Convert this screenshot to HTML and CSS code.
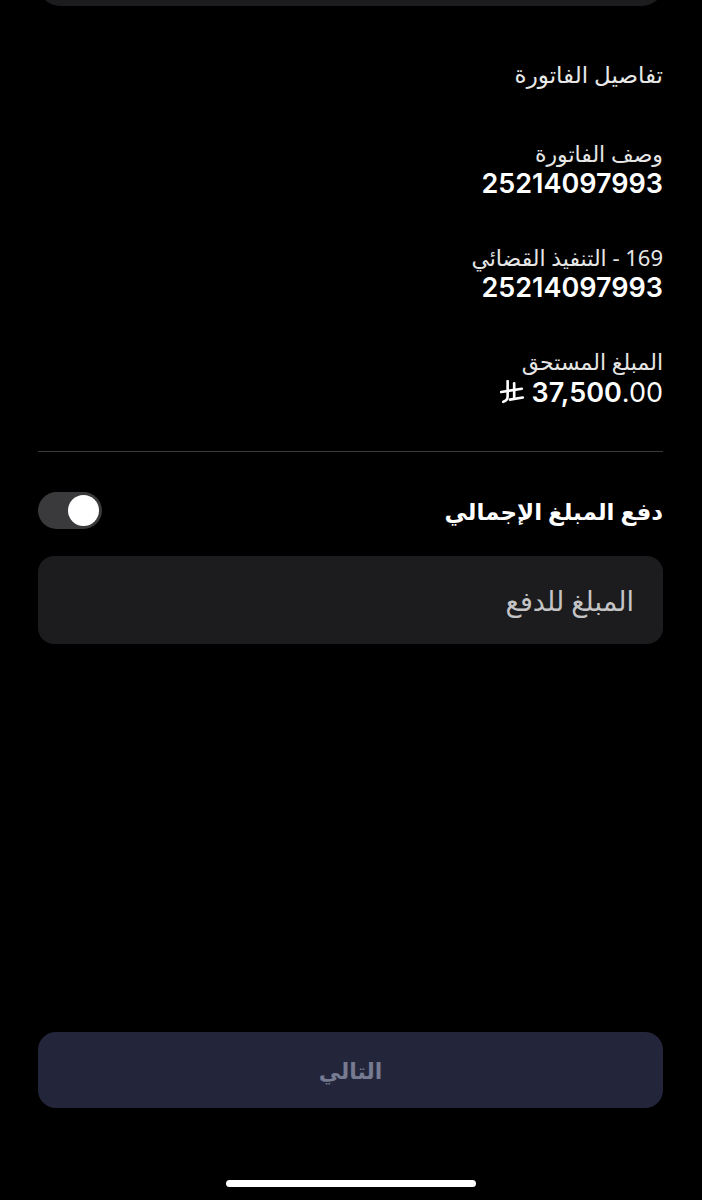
FILE: index.html
```html
<!DOCTYPE html>
<html lang="ar" dir="rtl">
<head>
    <meta charset="UTF-8">
    <meta name="viewport" content="width=device-width, initial-scale=1.0">
    <title>تفاصيل الفاتورة</title>
    <link rel="stylesheet" href="styles.css">
</head>
<body>
    <div class="screen">
        <div class="top-card"></div>

        <div class="content">
            <h2 class="title">تفاصيل الفاتورة</h2>

            <div class="detail">
                <div class="label">وصف الفاتورة</div>
                <div class="value">25214097993</div>
            </div>

            <div class="detail">
                <div class="label">169 - التنفيذ القضائي</div>
                <div class="value">25214097993</div>
            </div>

            <div class="detail">
                <div class="label">المبلغ المستحق</div>
                <div class="amount">
                    <svg class="riyal" width="24" height="24" viewBox="0 0 22 22">
                        <path d="M7 1 V15 Q7 19 3 20" />
                        <path d="M13 3 V17" />
                        <path d="M1 11 L20 8" />
                        <path d="M9 18 L21 16" />
                    </svg>
                    <span class="amount-int">37,500</span><span class="amount-dec">.00</span>
                </div>
            </div>

            <hr class="divider">

            <div class="toggle-row">
                <span class="toggle-label">دفع المبلغ الإجمالي</span>
                <span class="switch"><span class="knob"></span></span>
            </div>

            <input class="amount-input" type="text" placeholder="المبلغ للدفع">
        </div>

        <button class="next-btn" type="button">التالي</button>
        <div class="home-bar"></div>
    </div>
</body>
</html>
```

FILE: styles.css
```css
body {
    margin: 0;
    background-color: #000;
    color: #fff;
    font-family: "Noto Sans", "DejaVu Sans", sans-serif;
}
.screen {
    width: 702px;
    height: 1200px;
    display: flex;
    flex-direction: column;
    overflow: hidden;
}
.top-card {
    height: 40px;
    margin: -34px 38px 0;
    background: #1c1c1e;
    border-radius: 0 0 22px 22px;
}
.content {
    padding: 0 39px 0 38px;
}
.title {
    margin: 54px 0 51px;
    font-size: 23px;
    line-height: 28px;
    font-weight: 500;
    color: #e8e8e8;
}
.detail {
    margin-bottom: 43px;
}
.detail:last-of-type {
    margin-bottom: 0;
}
.label {
    font-size: 22px;
    line-height: 28px;
    color: #e6e6e6;
}
.value {
    margin-top: 1px;
    font-family: Inter, "Liberation Sans", sans-serif;
    font-size: 27px;
    line-height: 32px;
    font-weight: 600;
    color: #fff;
}
.amount {
    margin-top: 1px;
    display: flex;
    direction: ltr;
    justify-content: flex-end;
    align-items: center;
    height: 32px;
    font-family: Inter, "Liberation Sans", sans-serif;
    font-size: 27px;
    color: #fff;
}
.riyal {
    margin-right: 8px;
    fill: none;
    stroke: #fff;
    stroke-width: 2.4;
    stroke-linecap: round;
}
.amount-int {
    font-weight: 600;
}
.amount-dec {
    font-weight: 400;
}
.divider {
    margin: 42px 0 0;
    border: none;
    border-top: 1px solid #3a3a3c;
}
.toggle-row {
    margin-top: 40px;
    height: 37px;
    display: flex;
    justify-content: space-between;
    align-items: center;
}
.toggle-label {
    font-size: 23px;
    font-weight: 700;
    color: #fff;
}
.switch {
    width: 64px;
    height: 37px;
    border-radius: 19px;
    background: #3a3a3c;
    display: flex;
    align-items: center;
    padding: 0 3px;
    box-sizing: border-box;
}
.knob {
    width: 31px;
    height: 31px;
    border-radius: 50%;
    background: #fff;
}
.amount-input {
    display: block;
    width: 100%;
    height: 88px;
    margin-top: 27px;
    padding: 0 29px;
    box-sizing: border-box;
    border: none;
    border-radius: 16px;
    background: #1c1c1e;
    color: #fff;
    font-family: "Noto Sans", "DejaVu Sans", sans-serif;
    font-size: 27px;
    direction: rtl;
    outline: none;
}
.amount-input::placeholder {
    color: #c4c4c6;
}
.next-btn {
    margin: auto 39px 0 38px;
    height: 76px;
    border: none;
    border-radius: 18px;
    background: #23253b;
    color: #767b91;
    font-family: "Noto Sans", "DejaVu Sans", sans-serif;
    font-size: 22px;
    font-weight: 700;
}
.home-bar {
    align-self: center;
    width: 250px;
    height: 7px;
    margin: 72px 0 13px;
    border-radius: 4px;
    background: #fff;
}
```
